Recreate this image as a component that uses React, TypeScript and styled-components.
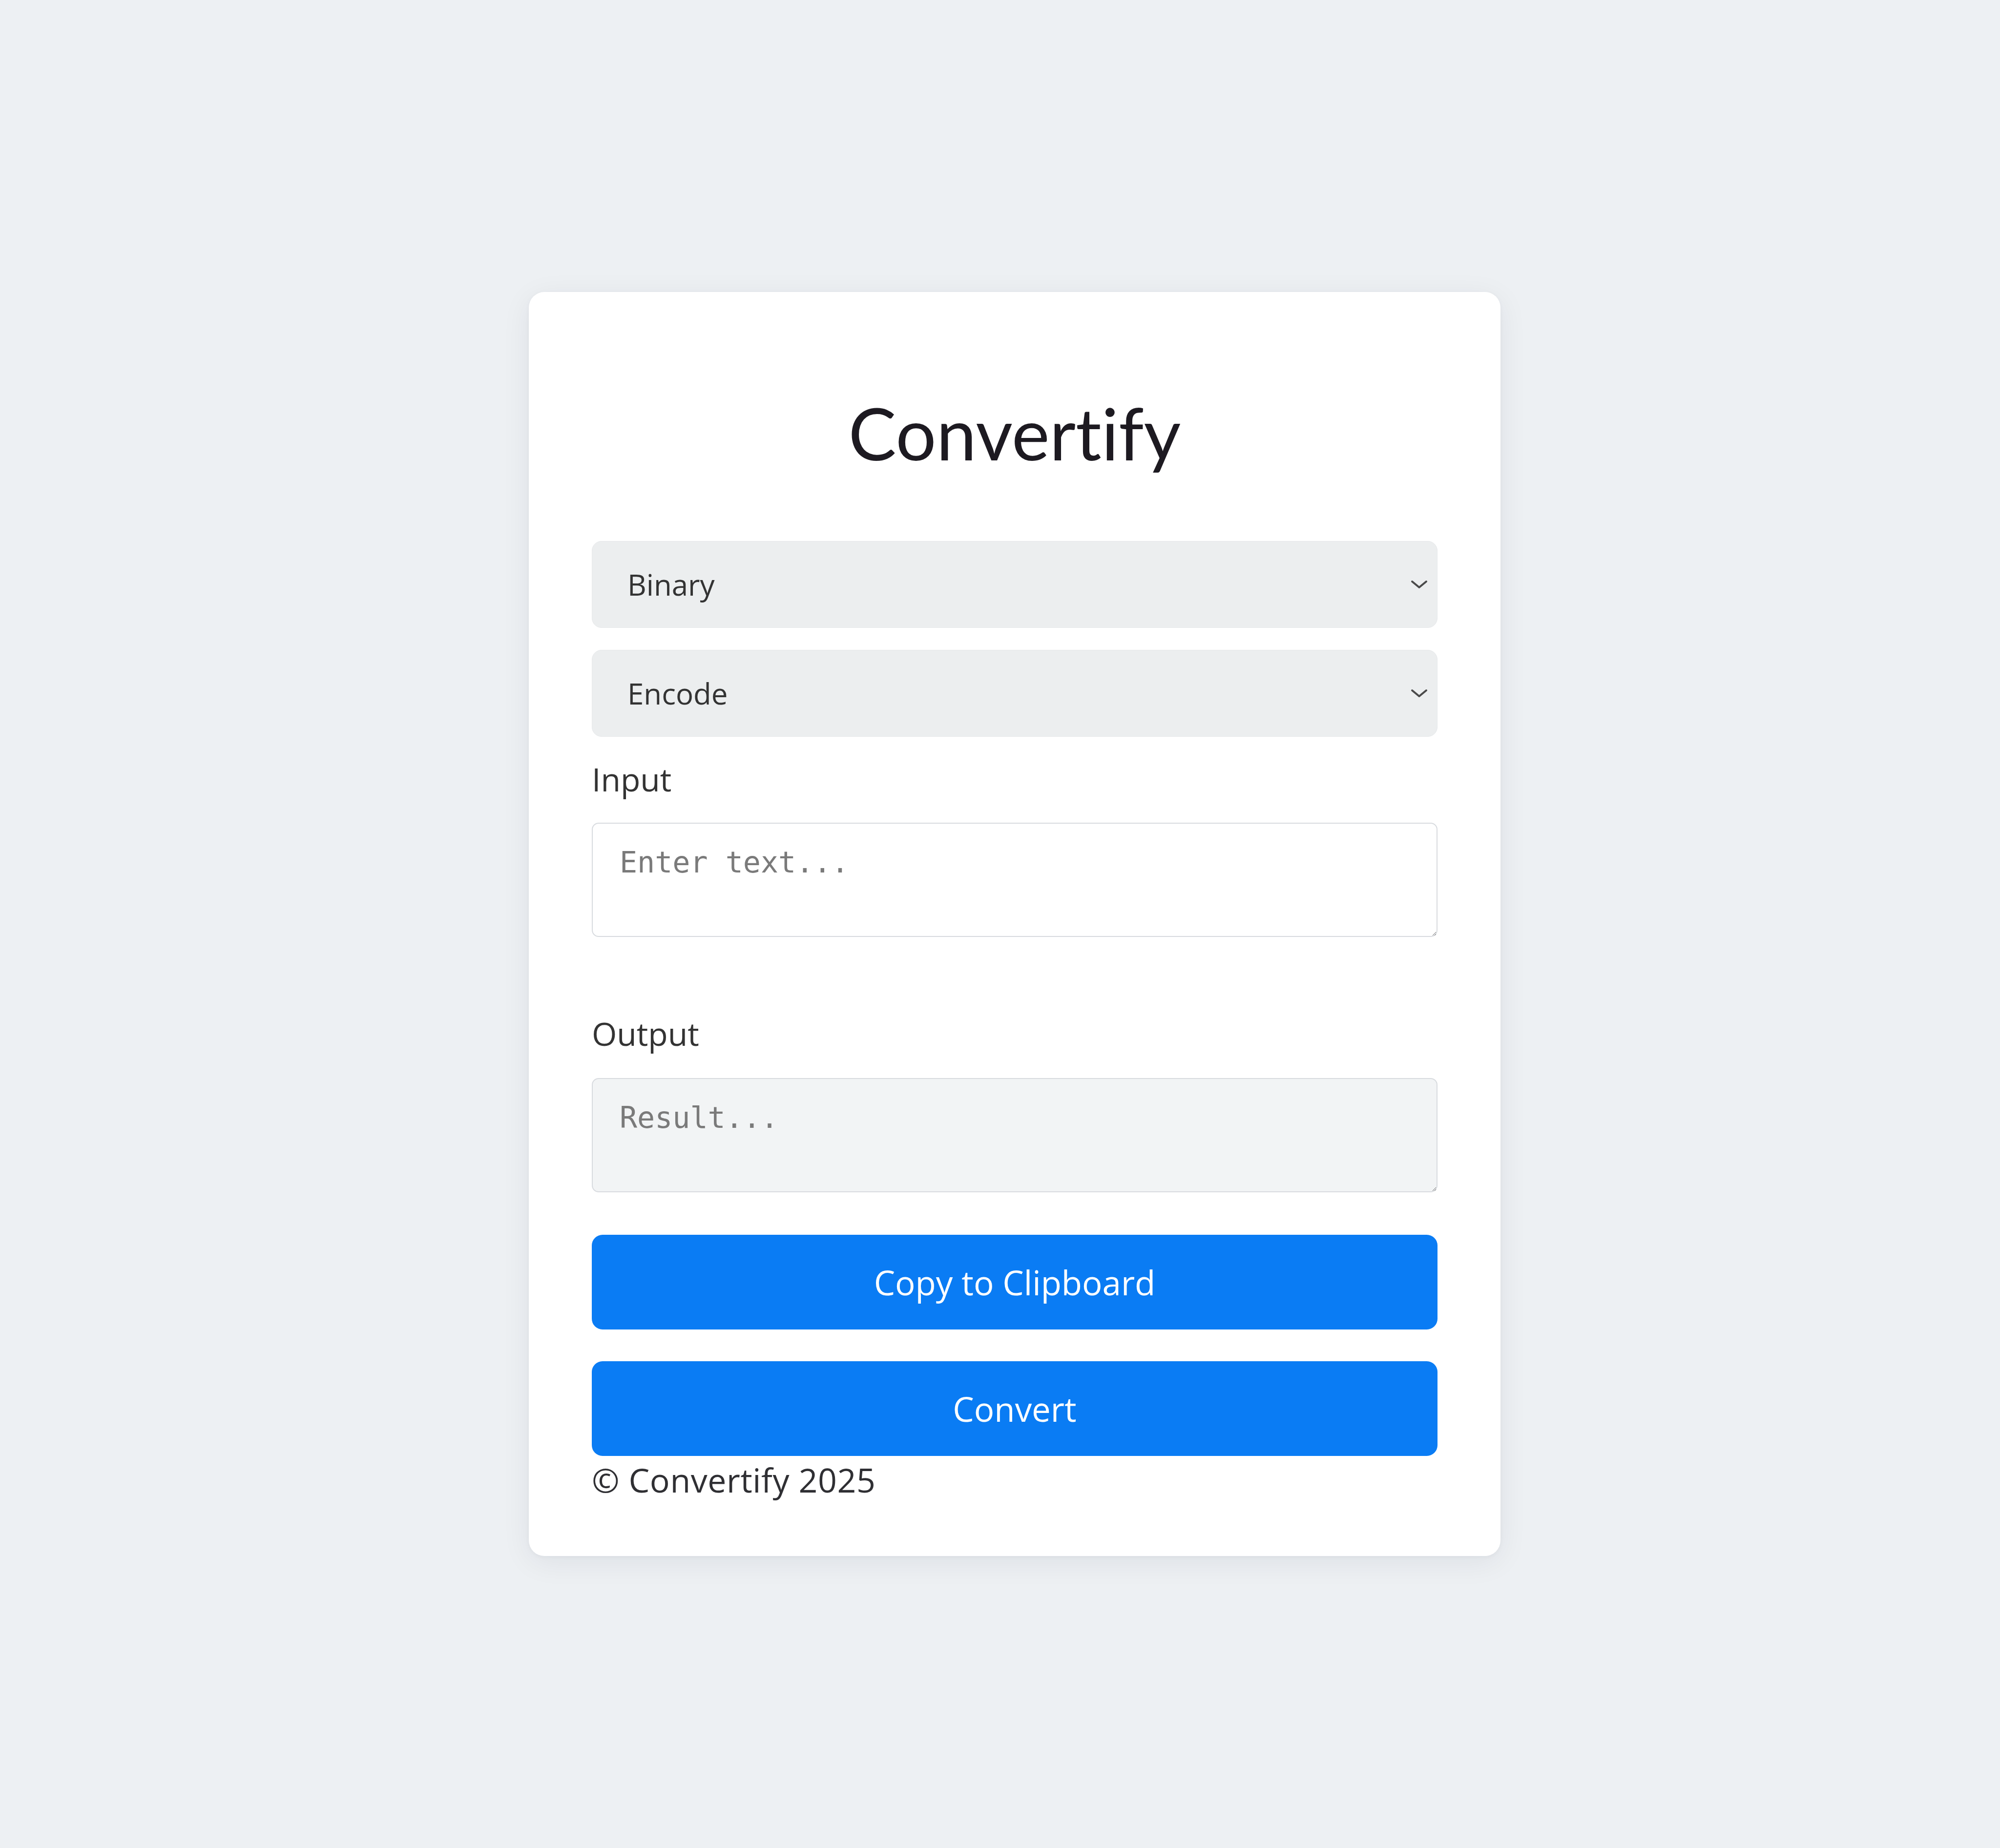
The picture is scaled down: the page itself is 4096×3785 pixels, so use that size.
import React from "react";
import styled, { createGlobalStyle } from "styled-components";

const GlobalStyle = createGlobalStyle`
  html, body {
    margin: 0;
    padding: 0;
    background: #edf0f3;
  }
  body {
    font-family: "Open Sans", "Liberation Sans", Arial, sans-serif;
    color: #333;
  }
  * { box-sizing: border-box; }
`;

const Page = styled.main`
  min-height: 100vh;
  display: flex;
  align-items: center;
  justify-content: center;
  padding-left: 60px;
`;

const Card = styled.section`
  width: 1990px;
  background: #ffffff;
  border-radius: 32px;
  box-shadow: 0 12px 60px rgba(20, 30, 50, 0.07), 0 2px 10px rgba(20, 30, 50, 0.04);
  padding: 128px 129px 118px;
  display: flex;
  flex-direction: column;
`;

const Title = styled.h1`
  margin: 86px 0 148px;
  font-family: "Lato", "Liberation Sans", Arial, sans-serif;
  font-weight: 400;
  font-size: 147px;
  line-height: 148px;
  text-align: center;
  color: #1d1a21;
  font-variant-ligatures: none;
  font-feature-settings: "liga" 0, "clig" 0;
`;

const SelectWrap = styled.div<{ $mt?: number }>`
  position: relative;
  margin-top: ${(p) => p.$mt ?? 0}px;
`;

const Select = styled.select`
  appearance: none;
  -webkit-appearance: none;
  width: 100%;
  height: 178px;
  border: 1px solid #e6e8ea;
  border-radius: 20px;
  background: #eceeef;
  padding: 0 80px 0 72px;
  font-family: "Open Sans", "Liberation Sans", Arial, sans-serif;
  font-size: 60px;
  color: #333;
  outline: none;
`;

const Chevron = styled.svg`
  position: absolute;
  right: 19px;
  top: 50%;
  width: 37px;
  height: 22px;
  transform: translateY(-50%);
  pointer-events: none;
`;

const Label = styled.label<{ $mt: number }>`
  display: block;
  margin: ${(p) => p.$mt}px 0 0;
  font-size: 66px;
  line-height: 75.6px;
  color: #333;
`;

const TextArea = styled.textarea<{ $mt: number; $readonlyBg?: boolean }>`
  display: block;
  width: 100%;
  height: 234px;
  margin-top: ${(p) => p.$mt}px;
  border: 2px solid #d8dbdf;
  border-radius: 14px;
  background: ${(p) => (p.$readonlyBg ? "#f2f4f5" : "#ffffff")};
  padding: 44px 55px;
  font-family: "DejaVu Sans Mono", "Liberation Mono", monospace;
  font-size: 60px;
  color: #333;
  outline: none;
  &::placeholder {
    color: #7a7a7a;
  }
`;

const Button = styled.button<{ $mt: number }>`
  display: block;
  width: 100%;
  height: 194px;
  margin-top: ${(p) => p.$mt}px;
  border: none;
  border-radius: 22px;
  background: #0a7cf4;
  color: #ffffff;
  font-family: "Open Sans", "Liberation Sans", Arial, sans-serif;
  font-weight: 500;
  font-size: 69px;
  cursor: pointer;
`;

const Footer = styled.footer`
  margin-top: 11px;
  font-size: 68px;
  line-height: 76.8px;
  letter-spacing: 0.6px;
  color: #2f2f33;
`;

const ChevronIcon = () => (
  <Chevron viewBox="0 0 37 22" fill="none">
    <polyline
      points="4,5 18.5,17 33,5"
      stroke="#4a4a4a"
      strokeWidth="4"
      strokeLinecap="round"
      strokeLinejoin="round"
    />
  </Chevron>
);

export default function App() {
  return (
    <>
      <GlobalStyle />
      <Page>
        <Card>
          <Title>Convertify</Title>
          <SelectWrap>
            <Select defaultValue="binary">
              <option value="binary">Binary</option>
              <option value="hex">Hexadecimal</option>
              <option value="base64">Base64</option>
            </Select>
            <ChevronIcon />
          </SelectWrap>
          <SelectWrap $mt={45}>
            <Select defaultValue="encode">
              <option value="encode">Encode</option>
              <option value="decode">Decode</option>
            </Select>
            <ChevronIcon />
          </SelectWrap>
          <Label $mt={49}>Input</Label>
          <TextArea $mt={52} placeholder="Enter text..." />
          <Label $mt={160}>Output</Label>
          <TextArea $mt={53} $readonlyBg placeholder="Result..." readOnly />
          <Button $mt={87}>Copy to Clipboard</Button>
          <Button $mt={65}>Convert</Button>
          <Footer>© Convertify 2025</Footer>
        </Card>
      </Page>
    </>
  );
}
